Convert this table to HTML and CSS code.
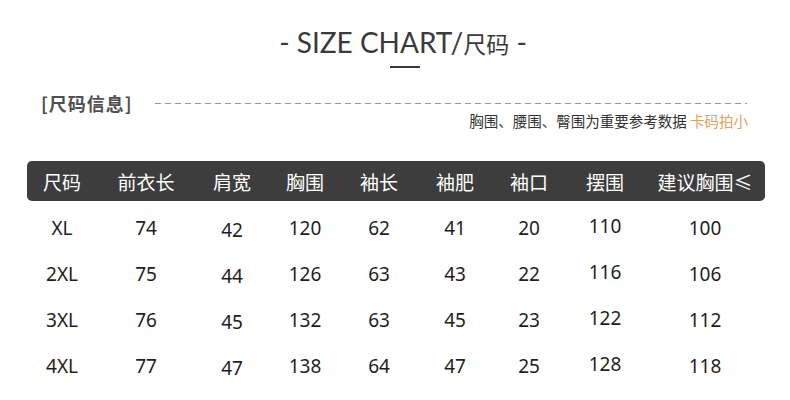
FILE: index.html
```html
<!DOCTYPE html>
<html lang="zh">
<head>
<meta charset="utf-8">
<link rel="stylesheet" href="styles.css">
</head>
<body>
<div class="page">
  <header class="title-block">
    <h1 class="title">- SIZE CHART/<span class="cjk">尺码</span> -</h1>
    <div class="title-rule"></div>
  </header>
  <section class="info">
    <div class="info-top">
      <span class="info-label">[尺码信息]</span>
      <span class="dash"></span>
    </div>
    <p class="note">胸围、腰围、臀围为重要参考数据 <span class="accent">卡码拍小</span></p>
  </section>
  <div class="table">
    <div class="row head">
      <span>尺码</span><span>前衣长</span><span>肩宽</span><span>胸围</span><span>袖长</span><span>袖肥</span><span>袖口</span><span>摆围</span><span>建议胸围≤</span>
    </div>
    <div class="row">
      <span>XL</span><span>74</span><span class="low">42</span><span>120</span><span>62</span><span>41</span><span>20</span><span class="high">110</span><span>100</span>
    </div>
    <div class="row">
      <span>2XL</span><span>75</span><span class="low">44</span><span>126</span><span>63</span><span>43</span><span>22</span><span class="high">116</span><span>106</span>
    </div>
    <div class="row">
      <span>3XL</span><span>76</span><span class="low">45</span><span>132</span><span>63</span><span>45</span><span>23</span><span class="high">122</span><span>112</span>
    </div>
    <div class="row">
      <span>4XL</span><span>77</span><span class="low">47</span><span>138</span><span>64</span><span>47</span><span>25</span><span class="high">128</span><span>118</span>
    </div>
  </div>
</div>
</body>
</html>
```

FILE: styles.css
```css
* { box-sizing: border-box; margin: 0; padding: 0; }
html, body { background: #ffffff; }
body {
  width: 790px;
  height: 400px;
  overflow: hidden;
  font-family: "Noto Sans", "Noto Sans CJK SC", sans-serif;
  color: #222;
}
.page {
  padding: 24px 25px 0 27px;
}
.title-block {
  display: flex;
  flex-direction: column;
  align-items: center;
  padding-left: 14px;
}
.title {
  font-family: "Lato", "Noto Sans CJK SC", sans-serif;
  font-weight: 400;
  font-size: 28px;
  line-height: 36px;
  color: #3a3a3a;
  letter-spacing: 0;
}
.title .cjk {
  font-family: "Noto Sans CJK SC", sans-serif;
  font-weight: 400;
  font-size: 23px;
}
.title-rule {
  width: 30px;
  height: 2px;
  background: #3a3a3a;
  margin-top: 5px;
  margin-left: 4px;
}
.info {
  margin-top: 24px;
  padding: 0 18px 0 14px;
}
.info-top {
  display: flex;
  align-items: center;
  gap: 22px;
}
.info-label {
  font-family: "Noto Sans CJK SC", sans-serif;
  font-weight: 700;
  font-size: 18px;
  letter-spacing: 1px;
  line-height: 22px;
  color: #505050;
}
.dash {
  flex: 1;
  height: 1px;
  background: repeating-linear-gradient(to right, #9a9a9a 0 6px, transparent 6px 10px);
  margin-top: 1px;
}
.note {
  text-align: right;
  font-family: "Noto Sans CJK SC", sans-serif;
  font-size: 14.5px;
  line-height: 18px;
  color: #333;
  margin-top: -2px;
  margin-right: -1px;
}
.accent { color: #e3a15c; }
.table {
  margin-top: 31px;
  width: 738px;
}
.row {
  display: grid;
  grid-template-columns: 70px 98px 74px 72px 76px 76px 72px 80px 120px;
  height: 46px;
  align-items: center;
  font-size: 19px;
  color: #1e1e1e;
}
.row span { text-align: center; }
.row.head {
  height: 40px;
  background: #3d3d3d;
  border-radius: 5px;
  color: #ffffff;
  font-family: "Noto Sans CJK SC", sans-serif;
  font-size: 19px;
  margin-bottom: 4px;
}
.row .low { position: relative; top: 2px; }
.row .high { position: relative; top: -2px; }
```
